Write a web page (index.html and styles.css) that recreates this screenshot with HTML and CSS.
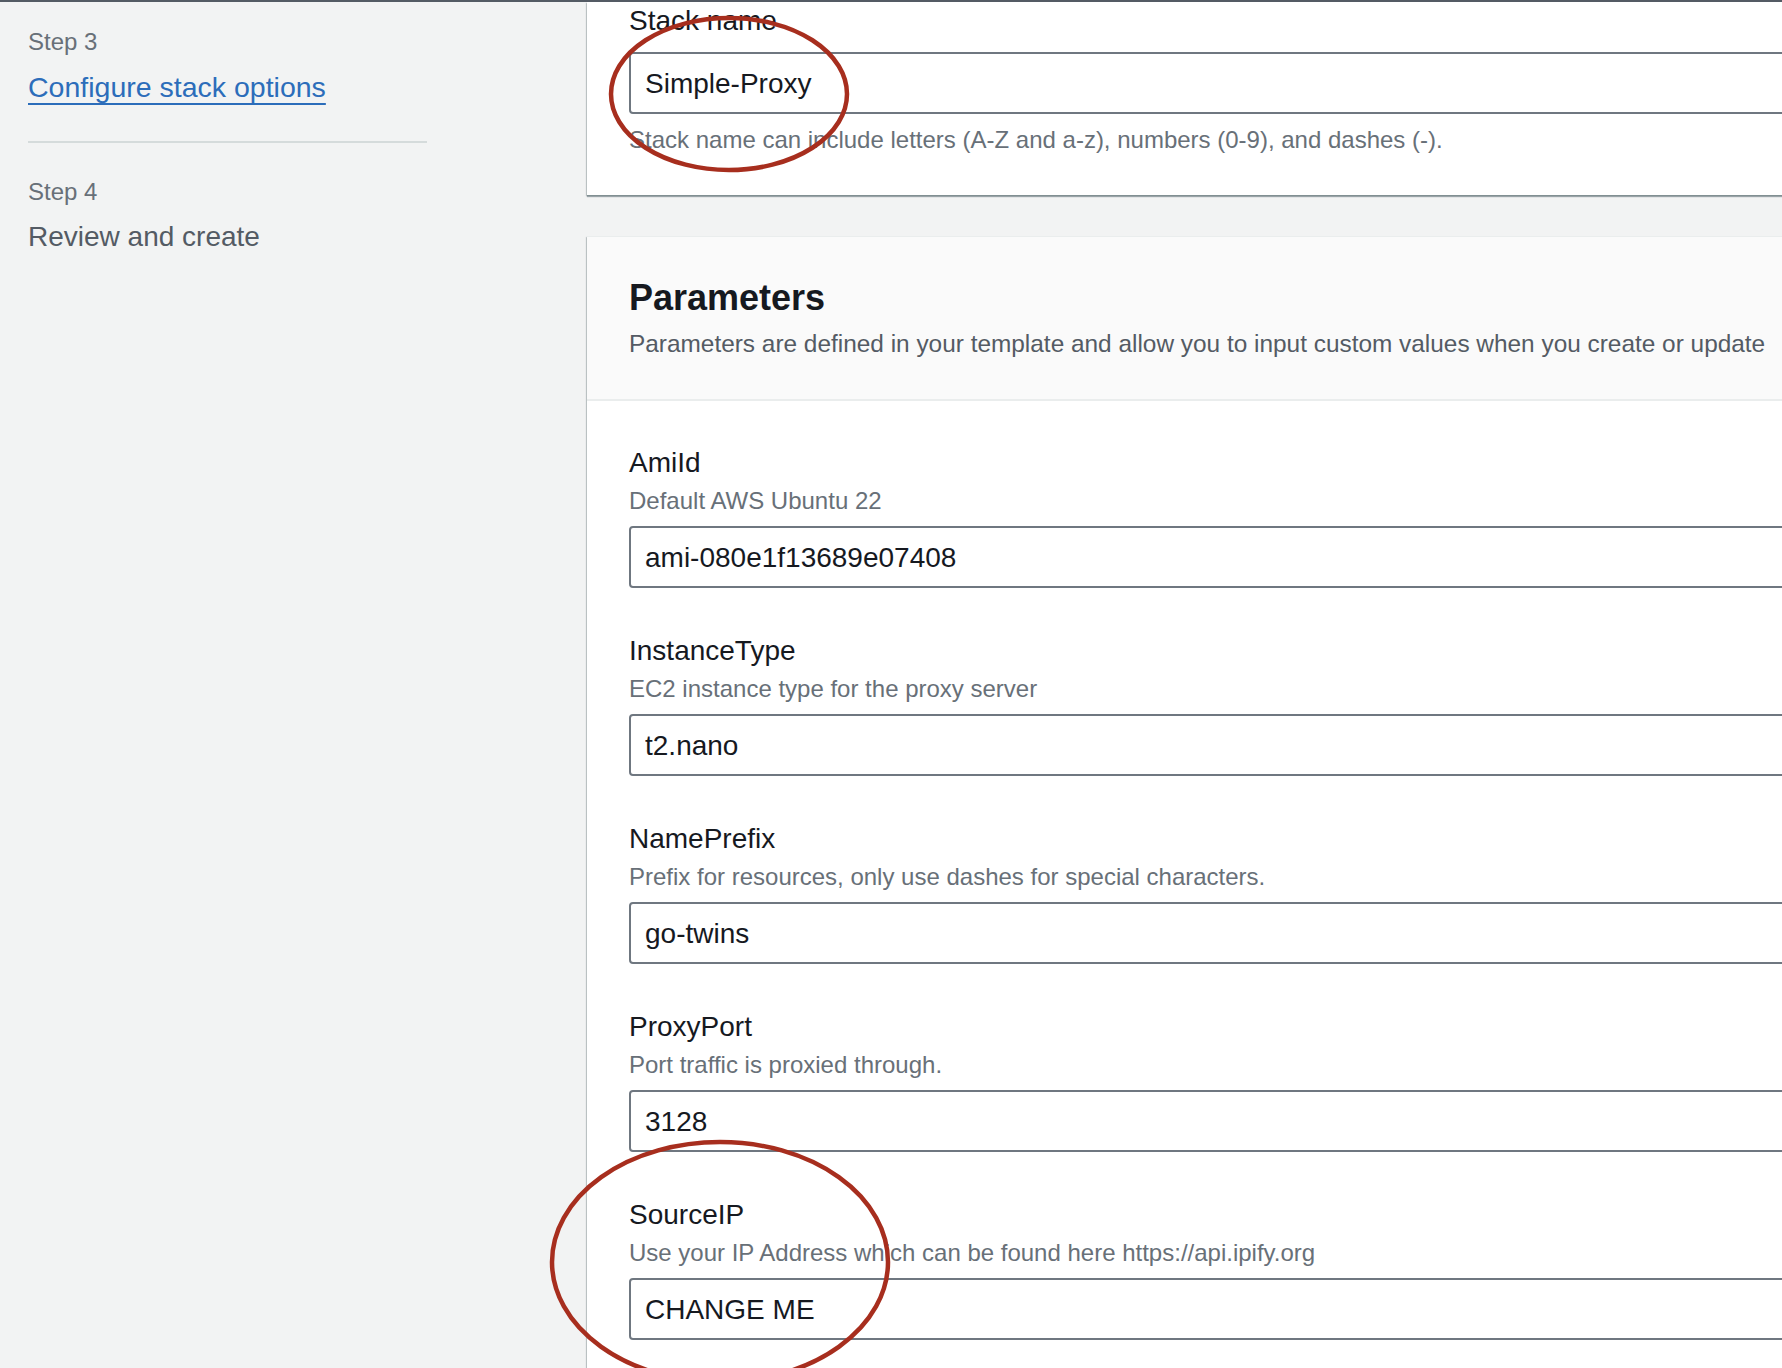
FILE: index.html
```html
<!DOCTYPE html>
<html lang="en">
<head>
<meta charset="utf-8">
<title>Create stack - Specify stack details</title>
<link rel="stylesheet" href="styles.css">
</head>
<body>
<div class="topbar"></div>
<div class="page">
  <nav class="steps">
    <div class="step-num">Step 3</div>
    <a class="step-link" href="#">Configure stack options</a>
    <div class="step-divider"></div>
    <div class="step-num step-num-4">Step 4</div>
    <div class="step-title">Review and create</div>
  </nav>
  <main class="main">
    <section class="card card-stack">
      <label class="field-label field-label-tight">Stack name</label>
      <input class="text-input text-input-stack" type="text" value="Simple-Proxy">
      <div class="helper">Stack name can include letters (A-Z and a-z), numbers (0-9), and dashes (-).</div>
    </section>
    <section class="card card-params">
      <header class="card-header">
        <h2 class="card-title">Parameters</h2>
        <p class="card-desc">Parameters are defined in your template and allow you to input custom values when you create or update</p>
      </header>
      <div class="card-body">
        <div class="field">
          <label class="field-label">AmiId</label>
          <div class="field-desc">Default AWS Ubuntu 22</div>
          <input class="text-input" type="text" value="ami-080e1f13689e07408">
        </div>
        <div class="field">
          <label class="field-label">InstanceType</label>
          <div class="field-desc">EC2 instance type for the proxy server</div>
          <input class="text-input" type="text" value="t2.nano">
        </div>
        <div class="field">
          <label class="field-label">NamePrefix</label>
          <div class="field-desc">Prefix for resources, only use dashes for special characters.</div>
          <input class="text-input" type="text" value="go-twins">
        </div>
        <div class="field">
          <label class="field-label">ProxyPort</label>
          <div class="field-desc">Port traffic is proxied through.</div>
          <input class="text-input" type="text" value="3128">
        </div>
        <div class="field">
          <label class="field-label">SourceIP</label>
          <div class="field-desc">Use your IP Address which can be found here https://api.ipify.org</div>
          <input class="text-input" type="text" value="CHANGE ME">
        </div>
      </div>
    </section>
  </main>
</div>
<svg class="annotations" width="1782" height="1368" viewBox="0 0 1782 1368" aria-hidden="true">
  <ellipse cx="729" cy="94" rx="118" ry="76" fill="none" stroke="#a72e1e" stroke-width="4.5"/>
  <ellipse cx="720" cy="1262" rx="168" ry="120" fill="none" stroke="#a72e1e" stroke-width="4.5"/>
</svg>
</body>
</html>
```

FILE: styles.css
```css
html, body {
  margin: 0;
  padding: 0;
}

body {
  width: 1782px;
  height: 1368px;
  overflow: hidden;
  position: relative;
  background: #f2f3f3;
  font-family: "Liberation Sans", Arial, sans-serif;
  color: #16191f;
}

.topbar {
  height: 2px;
  background: #545b64;
}

.page {
  display: grid;
  grid-template-columns: 587px 1500px;
  align-items: start;
}

/* ---- left steps navigation ---- */
.steps {
  padding: 22px 0 0 28px;
  display: flex;
  flex-direction: column;
  align-items: flex-start;
}

.step-num {
  font-size: 24px;
  line-height: 36px;
  color: #687078;
}

.step-num-4 {
  margin-top: 31px;
}

.step-link {
  margin-top: 7px;
  font-size: 28.5px;
  line-height: 40px;
  color: #2c6dba;
  text-decoration: underline;
  text-decoration-thickness: 2px;
  text-underline-offset: 6px;
}

.step-divider {
  margin-top: 34px;
  width: 399px;
  height: 2px;
  background: #d5dbdb;
}

.step-title {
  margin-top: 7px;
  font-size: 28px;
  line-height: 40px;
  color: #545b64;
}

/* ---- main column ---- */
.main {
  display: flex;
  flex-direction: column;
}

.card {
  background: #ffffff;
  box-shadow: 0 2px 1px rgba(0, 28, 36, 0.35), -1px 1px 1px rgba(0, 28, 36, 0.18);
}

.card-stack {
  padding: 1px 42px 37px 42px;
  display: flex;
  flex-direction: column;
}

.card-params {
  margin-top: 41px;
  border-top: 1px solid #eaeded;
}

.card-header {
  background: #fafafa;
  padding: 39px 42px 37px 42px;
  border-bottom: 2px solid #eaeded;
}

.card-title {
  margin: 0;
  font-size: 36px;
  line-height: 44px;
  font-weight: 700;
  color: #16191f;
}

.card-desc {
  margin: 6px 0 0 0;
  font-size: 24.4px;
  line-height: 36px;
  color: #545b64;
  white-space: nowrap;
}

.card-body {
  padding: 42px 42px 40px 42px;
  display: flex;
  flex-direction: column;
  gap: 43px;
}

.field {
  display: flex;
  flex-direction: column;
}

.field-label {
  font-size: 28px;
  line-height: 40px;
  color: #16191f;
}

.field-label-tight {
  line-height: 36px;
}

.field-desc {
  font-size: 24px;
  line-height: 36px;
  color: #687078;
}

.text-input {
  display: block;
  box-sizing: border-box;
  width: 100%;
  height: 62px;
  margin: 7px 0 0 0;
  padding: 1px 14px 0 14px;
  border: 2px solid #6f7780;
  border-radius: 4px;
  background: #ffffff;
  font-family: "Liberation Sans", Arial, sans-serif;
  font-size: 28px;
  color: #16191f;
  outline: none;
}

.text-input-stack {
  margin-top: 13px;
}

.helper {
  margin-top: 8px;
  font-size: 24px;
  line-height: 36px;
  color: #687078;
}

/* ---- annotation overlay (hand-drawn red circles) ---- */
.annotations {
  position: absolute;
  top: 0;
  left: 0;
  pointer-events: none;
}
```
